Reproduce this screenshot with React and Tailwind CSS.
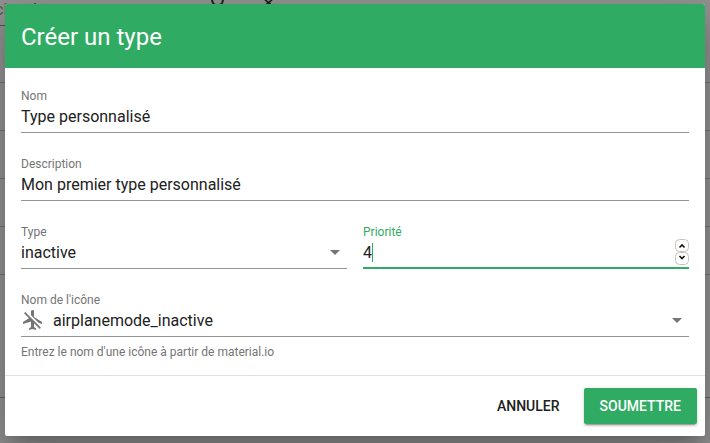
import React from "react";

function Caret() {
  return (
    <svg width="24" height="24" viewBox="0 0 24 24" fill="#757575" className="mb-0.5 shrink-0">
      <path d="M7 10l5 5 5-5z" />
    </svg>
  );
}

function Field({ label, children, active }) {
  return (
    <div className="flex h-[45px] flex-col">
      <label className={`block h-4 text-xs leading-4 ${active ? "text-[#30ab63]" : "text-[#757575]"}`}>{label}</label>
      <div className="flex h-7 items-center pb-1 pt-0.5 text-base leading-5 text-[#212121]">{children}</div>
      <div className={active ? "-mt-px h-0.5 shrink-0 bg-[#30ab63]" : "h-px shrink-0 bg-[#949494]"} />
    </div>
  );
}

function Backdrop() {
  return (
    <div className="absolute inset-0 overflow-hidden bg-[#949494]">
      <div className="absolute left-[-5px] top-0 text-base leading-5 text-[#555]">cl</div>
      <div className="absolute left-0 top-[25px] h-px w-2 bg-[#555]" />
      <div className="absolute left-[34px] top-[3px] h-px w-[2px] bg-[#555]" />
      <svg className="absolute left-[208px] top-0" width="70" height="5" fill="none" stroke="#222">
        <path d="M4 -1V0Q4.500 4 7.500 5M15 -1V0Q14.500 4 12 5" strokeWidth="2" />
        <path d="M56.500 -1L60.500 3L64.500 -1M58.500 4.500L60.500 2.500L62.500 4.500" strokeWidth="1.800" />
      </svg>
      <div className="mt-[82px] flex flex-col gap-[47px]">
        {[0, 1, 2, 3, 4].map((row) => <div key={row} className="h-px bg-[#777]" />)}
      </div>
      <div className="mt-[122px] h-px bg-[#666]" />
    </div>
  );
}

export default function App() {
  return (
    <div className="relative h-[443px] w-[710px] overflow-hidden font-[Roboto,sans-serif]">
      <Backdrop />
      <div className="relative mx-[5px] mt-1 flex h-[432px] flex-col overflow-hidden rounded-[2px] bg-white shadow-[0_11px_15px_-7px_rgba(0,0,0,0.2),0_24px_38px_3px_rgba(0,0,0,0.14),0_9px_46px_8px_rgba(0,0,0,0.12)]">
        <header className="flex h-16 shrink-0 items-center bg-[#30ab63] px-4 pt-0.5">
          <h1 className="text-2xl leading-8 text-white">Créer un type</h1>
        </header>
        <main className="flex h-[307px] flex-col gap-[23px] px-4 pt-5">
          <Field label="Nom">Type personnalisé</Field>
          <Field label="Description">Mon premier type personnalisé</Field>
          <div className="grid grid-cols-2 gap-4">
            <Field label="Type">
              <span className="flex-1">inactive</span>
              <Caret />
            </Field>
            <Field label="Priorité" active>
              <span>4</span>
              <span className="mb-px h-[19px] w-px bg-[#30ab63]" />
              <div className="mb-0.5 ml-auto flex flex-col">
                {[true, false].map((up) => (
                  <svg key={String(up)} width="14" height="13" viewBox="0 0 14 13" fill="none">
                    <rect x="0.500" y="0.500" width="13" height="12" rx="4" stroke="#c8c2bd" />
                    <path d={up ? "M4.500 8.500L7 6L9.500 8.500" : "M4.500 4L7 6.500L9.500 4"} stroke="#111" strokeWidth="1.600" />
                  </svg>
                ))}
              </div>
            </Field>
          </div>
          <div>
            <Field label="Nom de l'icône">
              <svg width="24" height="24" viewBox="0 0 24 24" fill="#757575" className="mb-0.5 mr-2 shrink-0">
                <path d="M13 9V3.500C13 2.670 12.330 2 11.500 2S10 2.670 10 3.500v3.680l7.830 7.830L21 16v-2l-8-5zM3 5.270l4.990 4.990L2 14v2l8-2.500V19l-2 1.500V22l3.500-1 3.500 1v-1.500L13 19v-3.730L18.730 21 20 19.730 4.270 4 3 5.270z" />
              </svg>
              <span className="flex-1">airplanemode_inactive</span>
              <Caret />
            </Field>
            <p className="mt-[7px] text-xs leading-4 text-[#757575]">Entrez le nom d'une icône à partir de material.io</p>
          </div>
        </main>
        <footer className="flex flex-1 items-center justify-end gap-2 border-t border-[#e0e0e0] px-2">
          <button className="h-9 px-4 text-sm font-medium text-[#212121]">ANNULER</button>
          <button className="h-9 rounded-[2px] bg-[#30ab63] px-4 text-sm font-medium text-white shadow-[0_3px_1px_-2px_rgba(0,0,0,0.2),0_2px_2px_0_rgba(0,0,0,0.14),0_1px_5px_0_rgba(0,0,0,0.12)]">SOUMETTRE</button>
        </footer>
      </div>
    </div>
  );
}
